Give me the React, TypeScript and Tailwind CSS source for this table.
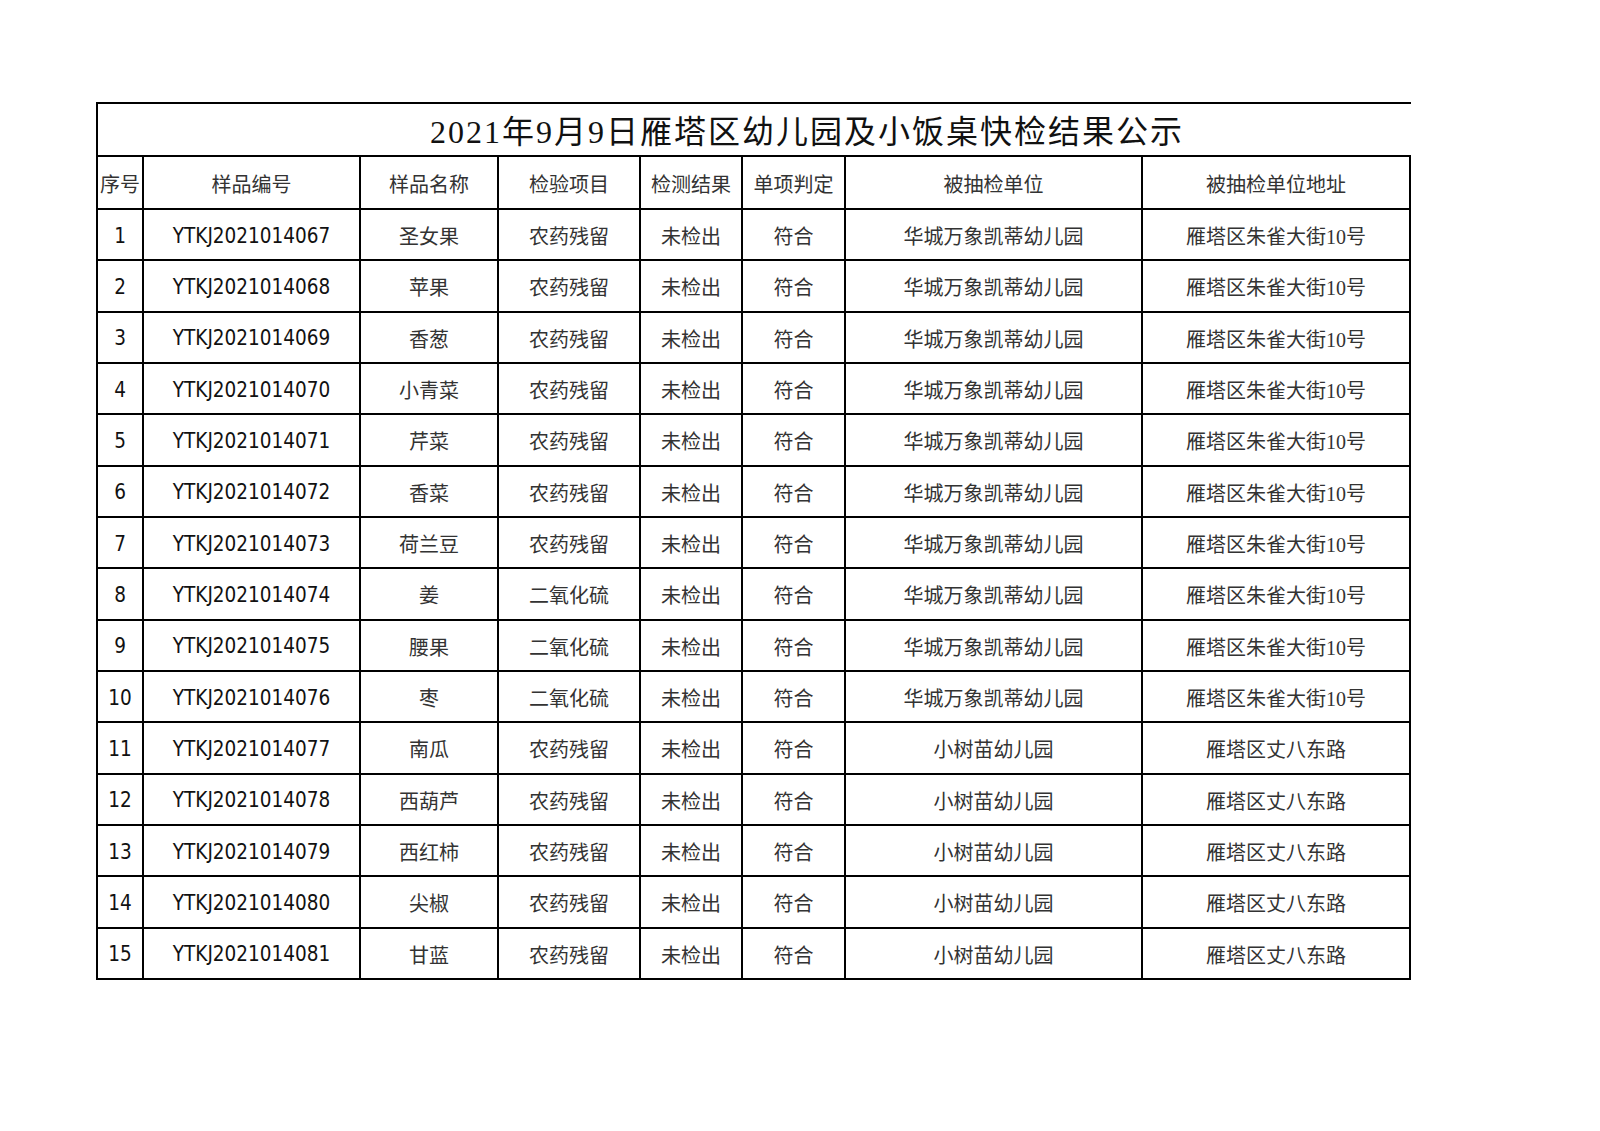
const ROWS: [string, string, string, string, string][] = [
  ["YTKJ2021014067", "圣女果", "农药残留", "华城万象凯蒂幼儿园", "雁塔区朱雀大街10号"],
  ["YTKJ2021014068", "苹果", "农药残留", "华城万象凯蒂幼儿园", "雁塔区朱雀大街10号"],
  ["YTKJ2021014069", "香葱", "农药残留", "华城万象凯蒂幼儿园", "雁塔区朱雀大街10号"],
  ["YTKJ2021014070", "小青菜", "农药残留", "华城万象凯蒂幼儿园", "雁塔区朱雀大街10号"],
  ["YTKJ2021014071", "芹菜", "农药残留", "华城万象凯蒂幼儿园", "雁塔区朱雀大街10号"],
  ["YTKJ2021014072", "香菜", "农药残留", "华城万象凯蒂幼儿园", "雁塔区朱雀大街10号"],
  ["YTKJ2021014073", "荷兰豆", "农药残留", "华城万象凯蒂幼儿园", "雁塔区朱雀大街10号"],
  ["YTKJ2021014074", "姜", "二氧化硫", "华城万象凯蒂幼儿园", "雁塔区朱雀大街10号"],
  ["YTKJ2021014075", "腰果", "二氧化硫", "华城万象凯蒂幼儿园", "雁塔区朱雀大街10号"],
  ["YTKJ2021014076", "枣", "二氧化硫", "华城万象凯蒂幼儿园", "雁塔区朱雀大街10号"],
  ["YTKJ2021014077", "南瓜", "农药残留", "小树苗幼儿园", "雁塔区丈八东路"],
  ["YTKJ2021014078", "西葫芦", "农药残留", "小树苗幼儿园", "雁塔区丈八东路"],
  ["YTKJ2021014079", "西红柿", "农药残留", "小树苗幼儿园", "雁塔区丈八东路"],
  ["YTKJ2021014080", "尖椒", "农药残留", "小树苗幼儿园", "雁塔区丈八东路"],
  ["YTKJ2021014081", "甘蓝", "农药残留", "小树苗幼儿园", "雁塔区丈八东路"],
];

const HEADERS = ["序号", "样品编号", "样品名称", "检验项目", "检测结果", "单项判定", "被抽检单位", "被抽检单位地址"];

// Song-style cells: serif latin digits, CJK falls through to Noto
const song = "[font-family:'Liberation_Serif','Noto_Sans_CJK_SC',serif] text-[20px] text-[#333] pt-[5px]";
const latin = "[font-family:'DejaVu_Sans_Condensed','DejaVu_Sans',sans-serif] text-[20.5px] text-[#111] pt-[3px]";

function Cell({ children, className = "" }: { children: React.ReactNode; className?: string }) {
  return (
    <div className={`flex items-center justify-center border-r-2 border-b-2 border-black whitespace-nowrap overflow-hidden ${className}`}>
      {children}
    </div>
  );
}

export default function App() {
  return (
    <div className="min-h-[1131px] w-[1600px] bg-white pt-[102px] pl-[96px]">
      <div className="w-[1315px] border-t-2 border-l-2 border-black">
        <div className="grid h-[876px] grid-cols-[46px_217px_138px_142px_102px_103px_297px_268px] grid-rows-[53px_53px_repeat(15,minmax(0,1fr))]">
          <div className="col-span-8 flex items-center border-b-2 border-black pl-[332px] pt-[4px]">
            <span className="[font-family:'Liberation_Serif','Noto_Sans_CJK_SC',serif] text-[32px] tracking-[2px] text-[#111]">
              2021年9月9日雁塔区幼儿园及小饭桌快检结果公示
            </span>
          </div>

          {HEADERS.map((h) => (
            <Cell key={h} className={song}>
              {h}
            </Cell>
          ))}

          {ROWS.map(([id, name, item, unit, addr], i) => (
            <div key={id} className="contents">
              <Cell className={latin}>{i + 1}</Cell>
              <Cell className={latin}>{id}</Cell>
              <Cell className={song}>{name}</Cell>
              <Cell className={song}>{item}</Cell>
              <Cell className={song}>未检出</Cell>
              <Cell className={song}>符合</Cell>
              <Cell className={song}>{unit}</Cell>
              <Cell className={song}>{addr}</Cell>
            </div>
          ))}
        </div>
      </div>
    </div>
  );
}
